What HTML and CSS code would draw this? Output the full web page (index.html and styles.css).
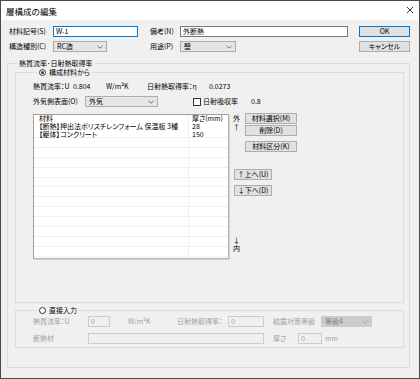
FILE: index.html
```html
<!DOCTYPE html>
<html>
<head>
    <title>層構成の編集</title>
    <link rel="stylesheet" href="styles.css">
</head>
<body>
    <div class="window">
        <!-- Title Bar -->
        <div class="title-bar">
            <span class="title">層構成の編集</span>
            <svg class="close" width="8" height="8" viewBox="0 0 8 8"><path d="M1 1L7 7M7 1L1 7" stroke="#222" stroke-width="0.9"/></svg>
        </div>

        <div class="client">
            <!-- Header Fields -->
            <div class="head-grid">
                <span>材料記号(S)</span>
                <div class="textbox focus w-85">W-1</div>
                <span>備考(N)</span>
                <div class="textbox w-168">外断熱</div>
                <div class="button default">OK</div>

                <span>構造種別(C)</span>
                <div class="combo w-54"><span>RC造</span><svg width="6" height="4" viewBox="0 0 6 4"><path d="M0.5 0.8L3 3.2L5.5 0.8" fill="none" stroke="#555" stroke-width="0.8"/></svg></div>
                <span>用途(P)</span>
                <div class="combo w-56"><span>壁</span><svg width="6" height="4" viewBox="0 0 6 4"><path d="M0.5 0.8L3 3.2L5.5 0.8" fill="none" stroke="#555" stroke-width="0.8"/></svg></div>
                <div class="button">キャンセル</div>
            </div>

            <!-- Heat Transfer Group -->
            <fieldset class="group outer">
                <legend>熱貫流率･日射熱取得率</legend>

                <fieldset class="group inner materials">
                    <legend><span class="radio checked"></span>構成材料から</legend>

                    <div class="value-row">
                        <span class="w-40">熱貫流率：U</span>
                        <span class="w-33">0.804</span>
                        <span class="w-41">W/m²K</span>
                        <span class="w-62">日射熱取得率：η</span>
                        <span>0.0273</span>
                    </div>

                    <div class="surface-row">
                        <span class="w-52">外気側表面(O)</span>
                        <div class="combo w-73"><span>外気</span><svg width="6" height="4" viewBox="0 0 6 4"><path d="M0.5 0.8L3 3.2L5.5 0.8" fill="none" stroke="#555" stroke-width="0.8"/></svg></div>
                        <span class="checkbox"></span>
                        <span class="w-48">日射吸収率</span>
                        <span>0.8</span>
                    </div>

                    <div class="layer-row">
                        <div class="layer-list">
                            <div class="list-row header">
                                <span class="col-name">材料</span>
                                <span class="col-thick">厚さ(mm)</span>
                            </div>
                            <div class="list-row item">
                                <span class="col-name">【断熱】押出法ポリスチレンフォーム 保温板 3種</span>
                                <span class="col-thick">28</span>
                            </div>
                            <div class="list-row item last">
                                <span class="col-name">【躯体】コンクリート</span>
                                <span class="col-thick">150</span>
                            </div>
                            <div class="list-row empty"><span class="col-name"></span><span class="col-thick"></span></div>
                            <div class="list-row empty"><span class="col-name"></span><span class="col-thick"></span></div>
                            <div class="list-row empty"><span class="col-name"></span><span class="col-thick"></span></div>
                            <div class="list-row empty"><span class="col-name"></span><span class="col-thick"></span></div>
                            <div class="list-row empty"><span class="col-name"></span><span class="col-thick"></span></div>
                            <div class="list-row empty"><span class="col-name"></span><span class="col-thick"></span></div>
                            <div class="list-row empty"><span class="col-name"></span><span class="col-thick"></span></div>
                            <div class="list-row empty"><span class="col-name"></span><span class="col-thick"></span></div>
                            <div class="list-row empty"><span class="col-name"></span><span class="col-thick"></span></div>
                            <div class="list-row empty"><span class="col-name"></span><span class="col-thick"></span></div>
                            <div class="list-row empty"><span class="col-name"></span><span class="col-thick"></span></div>
                            <div class="list-row empty"><span class="col-name"></span><span class="col-thick"></span></div>
                        </div>

                        <div class="side-panel">
                            <div class="side-top">
                                <div class="direction">
                                    <span>外</span>
                                    <span class="arrow">↑</span>
                                </div>
                                <div class="side-buttons">
                                    <div class="button">材料選択(M)</div>
                                    <div class="button">削除(D)</div>
                                    <div class="button gap">材料区分(K)</div>
                                </div>
                            </div>
                            <div class="move-buttons">
                                <div class="button">↑上へ(U)</div>
                                <div class="button">↓下へ(D)</div>
                            </div>
                            <div class="direction bottom">
                                <span class="arrow">↓</span>
                                <span>内</span>
                            </div>
                        </div>
                    </div>
                </fieldset>

                <!-- Direct Input Group -->
                <fieldset class="group inner direct">
                    <legend><span class="radio"></span>直接入力</legend>

                    <div class="direct-row">
                        <span class="w-55">熱貫流率：U</span>
                        <div class="textbox disabled w-22">0</div>
                        <span class="w-49 unit">W/m²K</span>
                        <span class="w-51">日射熱取得率：</span>
                        <div class="textbox disabled w-36">0</div>
                        <span class="w-48 pad">結露対策等級</span>
                        <div class="combo disabled w-51"><span>等級4</span><svg width="6" height="4" viewBox="0 0 6 4"><path d="M0.5 0.8L3 3.2L5.5 0.8" fill="none" stroke="#9a9a9a" stroke-width="0.8"/></svg></div>
                    </div>

                    <div class="direct-row">
                        <span class="w-55">断熱材</span>
                        <div class="textbox disabled w-176"></div>
                        <span class="w-25 pad">厚さ</span>
                        <div class="textbox disabled w-24">0</div>
                        <span class="mm">mm</span>
                    </div>
                </fieldset>
            </fieldset>
        </div>
    </div>
</body>
</html>
```

FILE: styles.css
```css
:root {
    --face: #f0f0f0;
    --text: #000000;
    --disabled: #a0a0a0;
    --group-line: #dcdcdc;
    --button-bg: #e1e1e1;
    --button-border: #adadad;
    --focus: #0078d7;
}

* {
    margin: 0;
    padding: 0;
    box-sizing: border-box;
}

body {
    font-family: "Noto Sans CJK JP", "Noto Sans", sans-serif;
    font-size: 7px;
    line-height: 9px;
    font-feature-settings: "palt";
    color: var(--text);
    background-color: #ffffff;
    white-space: nowrap;
}

/* Window Frame */
.window {
    width: 420px;
    height: 379px;
    border: 1px solid #4a4a4a;
    background-color: var(--face);
    overflow: hidden;
}

.title-bar {
    height: 19px;
    background-color: #ffffff;
    display: flex;
    align-items: center;
    justify-content: space-between;
    padding: 0 5px 0 5px;
}

.title {
    font-size: 8.5px;
    line-height: 10px;
    font-feature-settings: normal;
}

.close {
    display: block;
    margin-top: -1px;
}

.client {
    padding: 6px 0 0 8px;
}

/* Header Fields */
.head-grid {
    display: grid;
    grid-template-columns: 44px 97px 30px 179px 51px;
    grid-template-rows: 11px 11px;
    row-gap: 4px;
    align-items: center;
}

.textbox {
    height: 11px;
    background-color: #ffffff;
    border: 1px solid #7a7a7a;
    padding: 0 2px;
    line-height: 9px;
}

.textbox.focus {
    border-color: var(--focus);
}

.textbox.disabled {
    background-color: var(--face);
    border-color: #cccccc;
    color: var(--disabled);
}

.combo {
    height: 11px;
    background-color: #e5e5e5;
    border: 1px solid #acacac;
    padding: 0 3px 0 3px;
    display: flex;
    align-items: center;
    justify-content: space-between;
    line-height: 9px;
}

.combo.disabled {
    background-color: #cccccc;
    border-color: #cccccc;
    color: #838383;
}

.button {
    height: 11px;
    background-color: var(--button-bg);
    border: 1px solid var(--button-border);
    text-align: center;
    line-height: 9px;
}

.button.default {
    border-color: var(--focus);
}

/* Widths */
.w-22 { width: 22px; }
.w-24 { width: 24px; }
.w-25 { width: 25px; }
.w-33 { width: 33px; }
.w-36 { width: 36px; }
.w-40 { width: 40px; }
.w-41 { width: 41px; }
.w-48 { width: 48px; }
.w-49 { width: 49px; }
.w-51 { width: 51px; }
.w-52 { width: 52px; }
.w-54 { width: 54px; }
.w-55 { width: 55px; }
.w-56 { width: 56px; }
.w-62 { width: 62px; }
.w-73 { width: 73px; }
.w-85 { width: 85px; }
.w-168 { width: 168px; }
.w-176 { width: 176px; }

.value-row span,
.direct-row span,
.surface-row span {
    flex-shrink: 0;
}

/* Group Boxes */
.group {
    border: 1px solid var(--group-line);
    min-inline-size: 0;
}

.group legend {
    font-size: 7px;
    line-height: 9px;
    display: flex;
    align-items: center;
}

.outer {
    width: 403px;
    margin: 7px 0 0 -2px;
    padding: 0 0 19px 7px;
}

.outer > legend {
    margin-left: 2px;
    padding: 0 2px;
}

.inner {
    width: 389px;
}

.inner > legend {
    margin-left: 4px;
    padding: 0 2px;
}

.radio {
    width: 7px;
    height: 7px;
    border: 1px solid #333333;
    border-radius: 50%;
    background-color: #ffffff;
    margin-right: 3px;
    display: flex;
    align-items: center;
    justify-content: center;
}

.radio.checked::after {
    content: "";
    width: 3px;
    height: 3px;
    border-radius: 50%;
    background-color: #333333;
}

.materials {
    padding: 0 0 43px 17px;
}

.value-row {
    display: flex;
    margin-top: 5px;
}

.surface-row {
    display: flex;
    align-items: center;
    height: 11px;
    margin-top: 5px;
}

.surface-row .combo {
    margin-right: 35px;
}

.checkbox {
    width: 8px;
    height: 8px;
    border: 1px solid #333333;
    background-color: #ffffff;
    margin-right: 2px;
}

/* Layer List */
.layer-row {
    display: flex;
    margin-top: 7px;
}

.layer-list {
    width: 196px;
    height: 145px;
    background-color: #ffffff;
    border: 1px solid #a0a0a0;
    border-right-color: #b4b4b4;
    border-bottom-color: #b4b4b4;
    box-shadow: 1px 1px 0 #d4d4d4;
    overflow: hidden;
}

.list-row {
    display: flex;
    height: 8px;
    line-height: 8px;
}

.list-row.header {
    height: 7px;
    line-height: 7px;
}

.list-row.last,
.list-row.empty {
    border-bottom: 1px solid #f0f0f0;
}

.list-row.empty {
    height: 9.9px;
}

.col-name {
    width: 155px;
    padding-left: 5px;
    border-right: 1px solid #f0f0f0;
}

.col-thick {
    flex: 1;
    padding-left: 3px;
}

.side-panel {
    display: flex;
    flex-direction: column;
    height: 145px;
    padding-left: 3px;
}

.side-top {
    display: flex;
}

.direction {
    display: flex;
    flex-direction: column;
    align-items: center;
    width: 9px;
}

.arrow {
    line-height: 8px;
}

.side-buttons {
    display: flex;
    flex-direction: column;
    gap: 1px;
    margin-left: 4px;
    width: 52px;
    margin-top: -1px;
}

.side-buttons .button {
    height: 11px;
}

.side-buttons .button.gap {
    margin-top: 4px;
}

.move-buttons {
    display: flex;
    flex-direction: column;
    gap: 5px;
    width: 38px;
    margin: 17px 0 0 2px;
}

.direction.bottom {
    margin-top: auto;
    margin-bottom: 6px;
}

/* Direct Input */
.direct {
    margin-top: 3px;
    padding: 1px 0 3px 17px;
    color: var(--disabled);
}

.direct legend {
    color: #000000;
}

.direct-row {
    display: flex;
    align-items: center;
    height: 11px;
}

.direct-row + .direct-row {
    margin-top: 6px;
}

.direct-row .unit {
    margin-left: 18px;
}

.direct-row .pad {
    margin-left: 9px;
}

.mm {
    margin-left: 3px;
}
```
